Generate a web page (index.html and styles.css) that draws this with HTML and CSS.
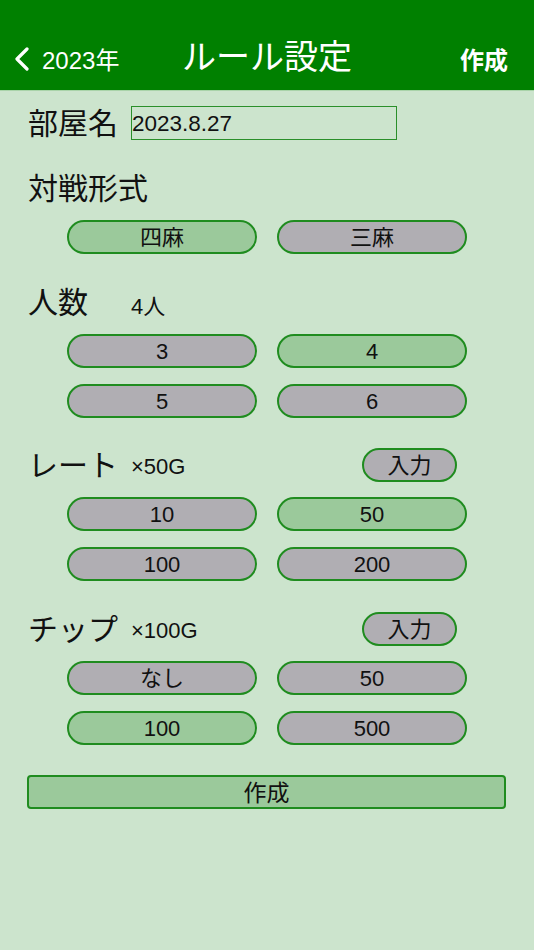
FILE: index.html
```html
<!DOCTYPE html>
<html lang="ja">
<head>
<meta charset="utf-8">
<title>ルール設定</title>
<link rel="stylesheet" href="styles.css">
</head>
<body>
<header class="nav">
  <div class="nav-left">
    <svg class="chev" width="16" height="24" viewBox="0 0 16 24"><polyline points="13,2 3,12 13,22" fill="none" stroke="#fff" stroke-width="3.2" stroke-linecap="round" stroke-linejoin="round"/></svg>
    <span class="back-text">2023年</span>
  </div>
  <div class="nav-title">ルール設定</div>
  <div class="nav-right">作成</div>
</header>
<main class="content">
  <div class="name-row">
    <span class="label">部屋名</span>
    <div class="name-input">2023.8.27</div>
  </div>

  <div class="label-row sec">
    <span class="label">対戦形式</span>
  </div>
  <div class="opts">
    <div class="opt on">四麻</div>
    <div class="opt">三麻</div>
  </div>

  <div class="label-row sec">
    <span class="label w">人数</span>
    <span class="value">4人</span>
  </div>
  <div class="opts">
    <div class="opt">3</div>
    <div class="opt on">4</div>
    <div class="opt">5</div>
    <div class="opt">6</div>
  </div>

  <div class="label-row sec2">
    <span class="label w">レート</span>
    <span class="value">×50G</span>
    <div class="input-btn">入力</div>
  </div>
  <div class="opts">
    <div class="opt">10</div>
    <div class="opt on">50</div>
    <div class="opt">100</div>
    <div class="opt">200</div>
  </div>

  <div class="label-row sec">
    <span class="label w">チップ</span>
    <span class="value">×100G</span>
    <div class="input-btn">入力</div>
  </div>
  <div class="opts">
    <div class="opt">なし</div>
    <div class="opt">50</div>
    <div class="opt on">100</div>
    <div class="opt">500</div>
  </div>

  <div class="create">作成</div>
</main>
</body>
</html>
```
FILE: styles.css
```css
html, body {
  margin: 0;
  padding: 0;
}
body {
  width: 534px;
  min-height: 950px;
  background: #cce4cd;
  font-family: "Liberation Sans", "Noto Sans CJK JP", sans-serif;
  color: #111;
}
.nav {
  height: 67px;
  padding-top: 23px;
  background: #008000;
  border-bottom: 1px solid #a9d3a9;
  display: grid;
  grid-template-columns: 1fr auto 1fr;
  align-items: center;
  color: #fff;
}
.nav-left {
  display: flex;
  align-items: center;
  padding-left: 14px;
}
.chev {
  display: block;
  margin-top: 4px;
}
.back-text {
  font-size: 24px;
  margin-left: 12px;
  margin-top: 3px;
}
.nav-title {
  font-size: 34px;
  line-height: 40px;
  margin-top: 0;
}
.nav-right {
  text-align: right;
  padding-right: 26px;
  font-size: 24px;
  font-weight: bold;
  margin-top: 3px;
}
.content {
  padding: 15px 0 0 28px;
  display: flex;
  flex-direction: column;
}
.name-row {
  display: flex;
  align-items: center;
  height: 34px;
}
.label {
  font-size: 30px;
  line-height: 34px;
  margin-top: 2px;
}
.label.w {
  width: 103px;
}
.name-input {
  box-sizing: border-box;
  margin-left: 13px;
  width: 266px;
  height: 34px;
  border: 1.5px solid #2a8f2a;
  font-size: 22.5px;
  line-height: 33px;
  padding-left: 0;
}
.label-row {
  display: flex;
  align-items: center;
  height: 34px;
  width: 429px;
}
.sec { margin-top: 31px; }
.sec2 { margin-top: 30px; }
.value {
  flex: 1;
  font-size: 22px;
  margin-top: 4px;
}
.input-btn {
  box-sizing: border-box;
  width: 95px;
  height: 34px;
  border: 2px solid #1f8c1f;
  border-radius: 17px;
  background: #b0aeb3;
  font-size: 22px;
  line-height: 31px;
  text-align: center;
}
.opts {
  margin-top: 15px;
  margin-left: 39px;
  display: grid;
  grid-template-columns: 190px 190px;
  column-gap: 20px;
  row-gap: 16px;
}
.opt {
  box-sizing: border-box;
  height: 34px;
  border: 2px solid #1f8c1f;
  border-radius: 17px;
  background: #b0aeb3;
  font-size: 22px;
  line-height: 32px;
  text-align: center;
}
.opt.on {
  background: #9bc99b;
}
.create {
  box-sizing: border-box;
  margin-top: 30px;
  margin-left: -1px;
  width: 479px;
  height: 34px;
  border: 2px solid #1f8c1f;
  border-radius: 4px;
  background: #9bc99b;
  font-size: 23px;
  line-height: 32px;
  text-align: center;
}
```
